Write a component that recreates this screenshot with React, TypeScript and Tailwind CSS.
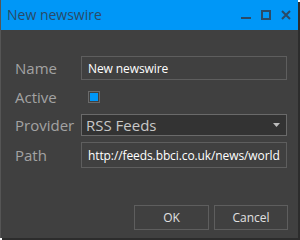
import { useState } from 'react'

export default function App() {
  const [name, setName] = useState('New newswire')
  const [active, setActive] = useState(true)
  const [path, setPath] = useState('http://feeds.bbci.co.uk/news/world/rss.xml')

  return (
    <div className="w-[300px] h-[240px] bg-white" style={{ fontFamily: '"Open Sans", "Noto Sans", sans-serif' }}>
      <div className="w-[298px] h-[238px] flex flex-col bg-[#404040] border-l border-[#555] shadow-[2px_2px_0_#2c2c2c]">
        <div className="h-[30px] shrink-0 flex items-center justify-between bg-[#0097f7] pl-[6px] pr-[7px]">
          <span className="text-[14px] text-[#2b4a66] leading-none">New newswire</span>
          <div className="flex items-center gap-[10px] text-[#2b4a66]">
            <svg width="10" height="10" viewBox="0 0 10 10"><rect x="0" y="7" width="10" height="2" fill="currentColor" /></svg>
            <svg width="10" height="10" viewBox="0 0 10 10"><rect x="1" y="1" width="8" height="8" fill="none" stroke="currentColor" strokeWidth="2" /></svg>
            <svg width="10" height="10" viewBox="0 0 10 10"><path d="M1 1L9 9M9 1L1 9" stroke="currentColor" strokeWidth="2" /></svg>
          </div>
        </div>

        <div className="flex-1 flex flex-col pl-[14px] pr-[10px] pt-[26px]">
          <div className="grid grid-cols-[66px_206px] items-center text-[15px] text-[#a3a3a3]">
            <span className="h-[24px] flex items-center">Name</span>
            <input
              className="h-[24px] px-[6px] bg-[#404040] border border-[#5e5e5e] outline-none text-[12px] tracking-[-0.1px] text-white"
              value={name}
              onChange={(e) => setName(e.target.value)}
            />

            <span className="h-[34px] flex items-center">Active</span>
            <div className="h-[34px] flex items-center pl-[7px]">
              <button
                className="w-[12px] h-[12px] border border-[#6a6a6a] flex items-center justify-center"
                onClick={() => setActive(!active)}
              >
                {active && <span className="w-[8px] h-[8px] bg-[#0097f7]" />}
              </button>
            </div>

            <span className="h-[22px] flex items-center">Provider</span>
            <div className="h-[22px] flex items-center justify-between bg-[#333] border border-[#6a6a6a] pl-[4px] pr-[6px]">
              <span className="text-[15px] text-[#c8c8c8]">RSS Feeds</span>
              <svg width="7" height="4" viewBox="0 0 7 4"><path d="M0 0H7L3.5 4Z" fill="#bdbdbd" /></svg>
            </div>

            <span className="h-[26px] mt-[6px] flex items-center">Path</span>
            <input
              className="h-[26px] mt-[6px] px-[6px] bg-[#404040] border border-[#5e5e5e] outline-none text-[12px] tracking-[-0.1px] text-white"
              value={path}
              onChange={(e) => setPath(e.target.value)}
            />
          </div>

          <div className="mt-auto mb-[8px] flex justify-end gap-[5px]">
            <button className="w-[75px] h-[25px] border border-[#5e5e5e] text-[12px] text-[#e0e0e0]">OK</button>
            <button className="w-[74px] h-[25px] border border-[#5e5e5e] text-[12px] text-[#e0e0e0]">Cancel</button>
          </div>
        </div>
      </div>
    </div>
  )
}
